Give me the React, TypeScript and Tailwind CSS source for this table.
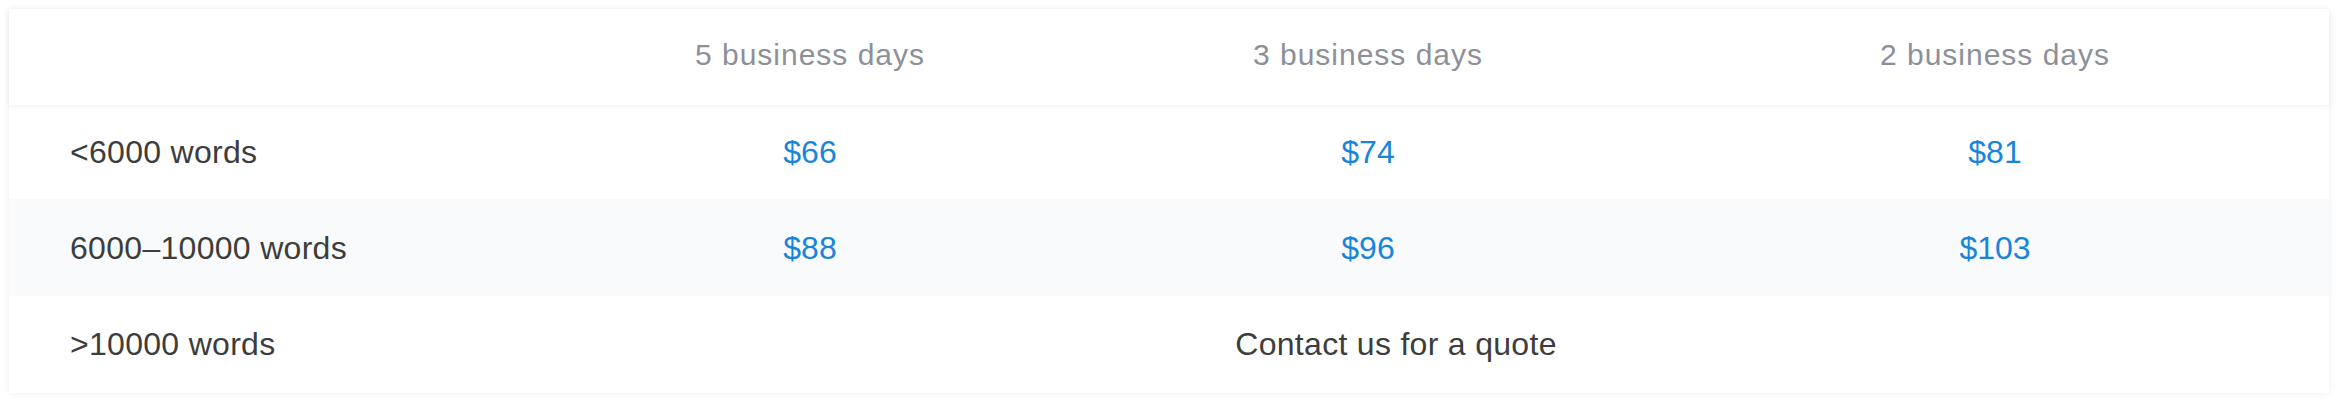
const columns = ["5 business days", "3 business days", "2 business days"]

const rows = [
  { label: "<6000 words", prices: ["$66", "$74", "$81"] },
  { label: "6000–10000 words", prices: ["$88", "$96", "$103"] },
]

const gridCols = "grid grid-cols-[536px_530px_586px_668px]"

export default function App() {
  return (
    <div className="min-h-[402px] bg-white p-[9px] font-['Liberation_Sans',Arial,sans-serif]">
      <div className="w-[2320px] rounded-[3px] bg-white shadow-[0_0_8px_rgba(0,0,0,0.07)]">
        <div
          className={`${gridCols} relative z-10 h-[96px] items-center pb-[5px] text-[30px] text-[#8d9099] shadow-[0_2px_5px_rgba(0,0,0,0.05)]`}
        >
          <div />
          {columns.map((col) => (
            <div key={col} className="text-center tracking-[1px]">
              {col}
            </div>
          ))}
        </div>

        {rows.map((row, i) => (
          <div
            key={row.label}
            className={`${gridCols} items-center text-[32px] ${
              i === 1 ? "h-[97px] bg-[#f9fafc]" : "h-[94px] bg-white"
            }`}
          >
            <div className="pl-[61px] tracking-[0.3px] text-[#3d3d3d]">{row.label}</div>
            {row.prices.map((price) => (
              <div key={price} className="text-center text-[#1785db]">
                {price}
              </div>
            ))}
          </div>
        ))}

        <div className={`${gridCols} h-[97px] items-center pb-[2px] text-[32px] text-[#3d3d3d]`}>
          <div className="pl-[61px] tracking-[0.3px]">&gt;10000 words</div>
          <div className="col-span-3 pr-[82px] text-center tracking-[0.3px]">
            Contact us for a quote
          </div>
        </div>
      </div>
    </div>
  )
}
